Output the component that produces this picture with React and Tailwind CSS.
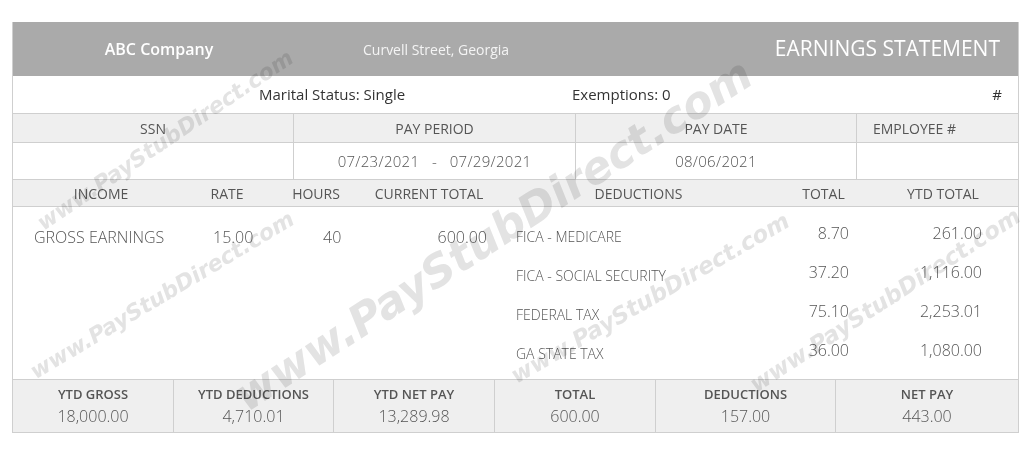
import React from 'react';

const deductions = [
  { label: 'FICA - MEDICARE', total: '8.70', ytd: '261.00' },
  { label: 'FICA - SOCIAL SECURITY', total: '37.20', ytd: '1,116.00' },
  { label: 'FEDERAL TAX', total: '75.10', ytd: '2,253.01' },
  { label: 'GA STATE TAX', total: '36.00', ytd: '1,080.00' },
];

const summary = [
  { label: 'YTD GROSS', value: '18,000.00', w: 'w-[161px]' },
  { label: 'YTD DEDUCTIONS', value: '4,710.01', w: 'w-[160px]' },
  { label: 'YTD NET PAY', value: '13,289.98', w: 'w-[161px]' },
  { label: 'TOTAL', value: '600.00', w: 'w-[161px]' },
  { label: 'DEDUCTIONS', value: '157.00', w: 'w-[180px]' },
  { label: 'NET PAY', value: '443.00', w: 'flex-1' },
];

// grid used by the income / deductions header and body
const cols = 'grid grid-cols-[176px_76px_102px_124px_15px_265px_105px_1fr]';

function Watermark({ className }) {
  return (
    <span
      className={`pointer-events-none absolute whitespace-nowrap font-bold italic text-[#e3e3e3] mix-blend-multiply select-none ${className}`}
      style={{ fontFamily: '"DejaVu Sans", Verdana, sans-serif' }}
    >
      www.PayStubDirect.com
    </span>
  );
}

export default function App() {
  return (
    <div
      className="relative w-[1030px] h-[476px] bg-white overflow-hidden pt-[22px] pl-[12px]"
      style={{ fontFamily: '"Open Sans", "Noto Sans", sans-serif' }}
    >
      <div className="w-[1007px] border-x border-[#cfcfcf] text-[#555]">
        {/* header band */}
        <div className="h-[54px] bg-[#aaaaaa] flex items-center text-white">
          <div className="w-[292px] text-center text-[16px] font-semibold">ABC Company</div>
          <div className="pl-[58px] text-[14px] text-[#f4f4f4]">Curvell Street, Georgia</div>
          <div className="ml-auto pr-[18px] text-[21px]">EARNINGS STATEMENT</div>
        </div>

        {/* marital / exemptions */}
        <div className="h-[38px] flex items-center border-b border-[#cfcfcf] text-[15px] text-[#333]">
          <div className="w-[559px] pl-[246px]">Marital Status: Single</div>
          <div>Exemptions: 0</div>
          <div className="ml-auto pr-[16px]">#</div>
        </div>

        {/* ssn / pay period / pay date / employee */}
        <div className="grid grid-cols-[281px_282px_281px_1fr] bg-[#efefef] h-[29px] border-b border-[#cfcfcf] text-[14px]">
          <div className="flex items-center justify-center border-r border-[#cfcfcf]">SSN</div>
          <div className="flex items-center justify-center border-r border-[#cfcfcf]">PAY PERIOD</div>
          <div className="flex items-center justify-center border-r border-[#cfcfcf]">PAY DATE</div>
          <div className="flex items-center pl-[16px]">EMPLOYEE #</div>
        </div>
        <div className="grid grid-cols-[281px_282px_281px_1fr] h-[37px] border-b border-[#cfcfcf] text-[15px] font-light">
          <div className="border-r border-[#cfcfcf]"></div>
          <div className="flex items-center justify-center border-r border-[#cfcfcf] whitespace-pre tracking-[0.3px]">07/23/2021   -   07/29/2021</div>
          <div className="flex items-center justify-center border-r border-[#cfcfcf] tracking-[0.3px]">08/06/2021</div>
          <div></div>
        </div>

        {/* income / deductions header */}
        <div className={`${cols} h-[27px] items-center bg-[#efefef] border-b border-[#cfcfcf] text-[14px]`}>
          <div className="text-center">INCOME</div>
          <div className="text-center">RATE</div>
          <div className="text-center">HOURS</div>
          <div className="text-center">CURRENT TOTAL</div>
          <div></div>
          <div className="text-center">DEDUCTIONS</div>
          <div className="text-center">TOTAL</div>
          <div className="text-center pr-[8px]">YTD TOTAL</div>
        </div>

        {/* body */}
        <div className="h-[172px] pt-[6px] font-light">
          {deductions.map((d, i) => (
            <div key={d.label} className={`${cols} h-[39px] items-center`}>
              {i === 0 ? (
                <>
                  <div className="pl-[21px] pt-[8px] text-[16px]">GROSS EARNINGS</div>
                  <div className="pl-[24px] pt-[8px] text-[16px]">15.00</div>
                  <div className="pl-[58px] pt-[8px] text-[16px]">40</div>
                  <div className="text-right pr-[4px] pt-[8px] text-[16px]">600.00</div>
                </>
              ) : (
                <>
                  <div></div>
                  <div></div>
                  <div></div>
                  <div></div>
                </>
              )}
              <div></div>
              <div className="pl-[10px] pt-[7px] text-[14px]">{d.label}</div>
              <div className="text-right pr-[27px] text-[16px]">{d.total}</div>
              <div className="text-right pr-[36px] text-[16px]">{d.ytd}</div>
            </div>
          ))}
        </div>

        {/* totals */}
        <div className="flex h-[54px] bg-[#efefef] border-y border-[#cfcfcf]">
          {summary.map((s, i) => (
            <div
              key={s.label}
              className={`${s.w} flex flex-col items-center justify-center ${i < summary.length - 1 ? 'border-r border-[#cfcfcf]' : ''}`}
            >
              <div className="text-[13px] font-semibold leading-[20px]">{s.label}</div>
              <div className="text-[16px] font-light leading-[24px]">{s.value}</div>
            </div>
          ))}
        </div>
      </div>

      {/* watermarks */}
      <Watermark className="left-[493px] top-[235px] -translate-x-1/2 -translate-y-1/2 -rotate-[33deg] text-[44px]" />
      <Watermark className="left-[165px] top-[140px] -translate-x-1/2 -translate-y-1/2 -rotate-[34deg] text-[22px]" />
      <Watermark className="left-[162px] top-[295px] -translate-x-1/2 -translate-y-1/2 -rotate-[31deg] text-[22px]" />
      <Watermark className="left-[650px] top-[298px] -translate-x-1/2 -translate-y-1/2 -rotate-[30deg] text-[23px]" />
      <Watermark className="left-[885px] top-[300px] -translate-x-1/2 -translate-y-1/2 -rotate-[33deg] text-[23px]" />
    </div>
  );
}
